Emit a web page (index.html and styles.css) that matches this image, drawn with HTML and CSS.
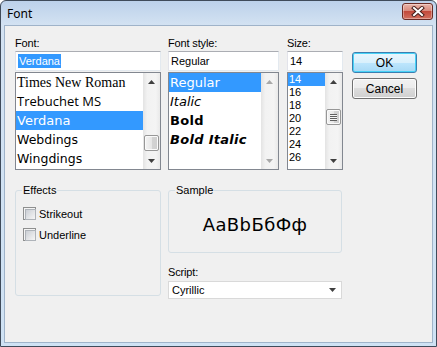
FILE: index.html
```html
<!DOCTYPE html>
<html lang="en">
<head>
    <meta charset="UTF-8">
    <title>Font</title>
    <link rel="stylesheet" href="styles.css">
</head>
<body>
    <div class="window">
        <div class="titlebar">
            <span class="title">Font</span>
            <div class="close">
                <svg width="14" height="11" viewBox="0 0 14 11">
                    <path d="M3 2l8 7M11 2l-8 7" stroke="#47201c" stroke-width="4" stroke-linecap="square"/>
                    <path d="M3 2l8 7M11 2l-8 7" stroke="#fff" stroke-width="2" stroke-linecap="square"/>
                </svg>
            </div>
        </div>

        <div class="client">
            <div class="top">
                <div class="col col-font">
                    <div class="label">Font:</div>
                    <div class="textbox"><span class="sel">Verdana</span></div>
                    <div class="listbox">
                        <div class="items">
                            <div class="item f-times">Times New Roman</div>
                            <div class="item f-trebuchet">Trebuchet MS</div>
                            <div class="item f-verdana selected">Verdana</div>
                            <div class="item f-symbol">Webdings</div>
                            <div class="item f-symbol">Wingdings</div>
                        </div>
                        <div class="scrollbar">
                            <div class="arrow"><svg width="7" height="4"><path d="M0 4h7L3.5 0z"/></svg></div>
                            <div class="track"><div class="thumb thumb-end"></div></div>
                            <div class="arrow"><svg width="7" height="4"><path d="M0 0h7L3.5 4z"/></svg></div>
                        </div>
                    </div>
                </div>

                <div class="col col-style">
                    <div class="label">Font style:</div>
                    <div class="textbox">Regular</div>
                    <div class="listbox">
                        <div class="items">
                            <div class="item f-verdana selected">Regular</div>
                            <div class="item f-verdana italic">Italic</div>
                            <div class="item f-verdana bold">Bold</div>
                            <div class="item f-verdana bold italic">Bold Italic</div>
                        </div>
                        <div class="scrollbar disabled">
                            <div class="arrow"><svg width="7" height="4"><path d="M0 4h7L3.5 0z"/></svg></div>
                            <div class="track"></div>
                            <div class="arrow"><svg width="7" height="4"><path d="M0 0h7L3.5 4z"/></svg></div>
                        </div>
                    </div>
                </div>

                <div class="col col-size">
                    <div class="label">Size:</div>
                    <div class="textbox">14</div>
                    <div class="listbox">
                        <div class="items small">
                            <div class="item selected">14</div>
                            <div class="item">16</div>
                            <div class="item">18</div>
                            <div class="item">20</div>
                            <div class="item">22</div>
                            <div class="item">24</div>
                            <div class="item">26</div>
                        </div>
                        <div class="scrollbar">
                            <div class="arrow"><svg width="7" height="4"><path d="M0 4h7L3.5 0z"/></svg></div>
                            <div class="track"><div class="thumb thumb-mid"><span class="grip"></span></div></div>
                            <div class="arrow"><svg width="7" height="4"><path d="M0 0h7L3.5 4z"/></svg></div>
                        </div>
                    </div>
                </div>

                <div class="buttons">
                    <div class="button default">OK</div>
                    <div class="button">Cancel</div>
                </div>
            </div>

            <div class="bottom">
                <fieldset class="group effects">
                    <legend>Effects</legend>
                    <div class="check"><span class="box"></span>Strikeout</div>
                    <div class="check"><span class="box"></span>Underline</div>
                </fieldset>

                <div class="col-sample">
                    <fieldset class="group sample">
                        <legend>Sample</legend>
                        <div class="sample-text">AaBbБбФф</div>
                    </fieldset>
                    <div class="label script-label">Script:</div>
                    <div class="combo">
                        <span>Cyrillic</span>
                        <svg width="7" height="4"><path d="M0 0h7L3.5 4z"/></svg>
                    </div>
                </div>
            </div>
        </div>
    </div>
</body>
</html>
```

FILE: styles.css
```css
* {
    box-sizing: border-box;
}
body {
    margin: 0;
    background: #fff;
    font-family: "Liberation Sans", Arial, sans-serif;
    font-size: 11px;
    color: #000;
}
.window {
    width: 437px;
    height: 347px;
    border: 1px solid #3f4b5a;
    border-radius: 6px 6px 0 0;
    background: linear-gradient(#bcd1ea, #d3e2f2 24px, #cfe2f4);
    display: flex;
    flex-direction: column;
}
.titlebar {
    height: 24px;
    display: flex;
    align-items: center;
    padding: 0 3px 0 6px;
}
.title {
    flex: 1;
    font-family: "Noto Sans", sans-serif;
    font-size: 12px;
}
.close {
    width: 31px;
    height: 17px;
    margin-top: -3px;
    border: 1px solid #6b2b25;
    border-radius: 3px;
    background: linear-gradient(#e9b4a9, #d98a7d 45%, #c24a3c 50%, #d3705f);
    box-shadow: inset 0 0 0 1px rgba(255, 255, 255, 0.35);
    display: flex;
    align-items: center;
    justify-content: center;
}
.client {
    flex: 1;
    margin: 0 3px 3px;
    border: 1px solid #9fb3c9;
    background: #f0f0f0;
    padding: 11px 0 0 10px;
}
.top {
    display: flex;
}
.label {
    line-height: 13px;
    letter-spacing: -0.15px;
}
.col-font {
    width: 146px;
}
.col-style {
    width: 111px;
    margin-left: 7px;
}
.col-size {
    width: 56px;
    margin-left: 8px;
}
.textbox {
    margin-top: 1px;
    height: 20px;
    background: #fff;
    border: 1px solid;
    border-color: #abadb3 #e3e9ef #e3e9ef #e2e3ea;
    padding-left: 2px;
    line-height: 18px;
}
.sel {
    background: #3399ff;
    color: #fff;
    padding: 1px 1px;
}
.listbox {
    margin-top: 1px;
    height: 98px;
    background: #fff;
    border: 1px solid #828790;
    display: flex;
}
.items {
    flex: 1;
    overflow: hidden;
}
.item {
    height: 19px;
    line-height: 19px;
    padding-left: 1px;
    white-space: nowrap;
}
.item.selected {
    background: #3399ff;
    color: #fff;
}
.f-times {
    font-family: "Liberation Serif", serif;
    font-size: 14px;
}
.f-trebuchet {
    font-family: "Open Sans", sans-serif;
    font-size: 13px;
}
.f-verdana {
    font-family: "DejaVu Sans", sans-serif;
    font-size: 13px;
}
.f-symbol {
    font-family: "DejaVu Sans", sans-serif;
    font-size: 12.5px;
}
.italic {
    font-style: italic;
}
.bold {
    font-weight: bold;
    letter-spacing: 0.3px;
}
.small .item {
    height: 13px;
    line-height: 13px;
}
.scrollbar {
    width: 17px;
    display: flex;
    flex-direction: column;
    background: linear-gradient(to right, #e3e3e3, #f2f2f2 25%, #f4f4f4 75%, #e9e9e9);
}
.arrow {
    height: 17px;
    display: flex;
    align-items: center;
    justify-content: center;
}
.arrow path,
.combo path {
    fill: #3f3f3f;
}
.disabled .arrow path {
    fill: #a8a8a8;
}
.track {
    flex: 1;
    display: flex;
    flex-direction: column;
}
.thumb {
    height: 16px;
    margin: 0 1px;
    border: 1px solid #979797;
    border-radius: 2px;
    background: linear-gradient(to right, #f4f4f4, #e6e6e6 50%, #d3d3d3 51%, #cfcfcf);
    box-shadow: inset 0 0 0 1px #fafafa;
    display: flex;
    align-items: center;
    justify-content: center;
}
.thumb-end {
    margin-top: auto;
    margin-bottom: 1px;
}
.thumb-mid {
    margin-top: 19px;
}
.grip {
    width: 7px;
    height: 7px;
    background: repeating-linear-gradient(#5f5f5f 0 1px, #f4f4f4 1px 2px);
}
.buttons {
    margin-left: 9px;
    padding-top: 15px;
    display: flex;
    flex-direction: column;
    gap: 5px;
}
.button {
    width: 65px;
    height: 21px;
    border: 1px solid #707070;
    border-radius: 3px;
    background: linear-gradient(#f2f2f2, #ebebeb 50%, #dddddd 50%, #cfcfcf);
    box-shadow: inset 0 0 0 1px #fcfcfc;
    display: flex;
    align-items: center;
    justify-content: center;
    font-size: 12px;
}
.button.default {
    border-color: #3c7fb1;
    background: linear-gradient(#eaf6fd, #d9f0fc 50%, #bee6fd 50%, #a7d9f5);
    box-shadow: inset 0 0 0 1px #48d3f7;
}
.bottom {
    display: flex;
    margin-top: 14px;
}
.group {
    margin: 0;
    padding: 0 6px;
    min-width: 0;
    border: 1px solid #d5dfe5;
    border-radius: 3px;
}
.group legend {
    padding: 0 1px;
    line-height: 13px;
}
.effects {
    width: 146px;
    height: 112px;
    padding-top: 10px;
}
.check {
    display: flex;
    align-items: center;
    gap: 3px;
    height: 13px;
    margin: 0 0 8px 1px;
}
.box {
    width: 13px;
    height: 13px;
    border: 1px solid #8e8f8f;
    background: #f4f4f4;
    padding: 1px;
}
.box::after {
    content: "";
    display: block;
    width: 9px;
    height: 9px;
    border: 1px solid #aeb3b9;
    background: linear-gradient(135deg, #cbcfd5, #f6f6f6);
}
.col-sample {
    width: 174px;
    margin-left: 7px;
}
.sample {
    height: 69px;
}
.sample-text {
    height: 55px;
    display: flex;
    align-items: center;
    justify-content: center;
    font-family: "DejaVu Sans", sans-serif;
    font-size: 18px;
    letter-spacing: 0.4px;
}
.script-label {
    margin-top: 13px;
}
.combo {
    margin-top: 2px;
    height: 18px;
    background: #fff;
    border: 1px solid #d9d9d9;
    padding: 0 5px 0 3px;
    display: flex;
    align-items: center;
    justify-content: space-between;
}
```
